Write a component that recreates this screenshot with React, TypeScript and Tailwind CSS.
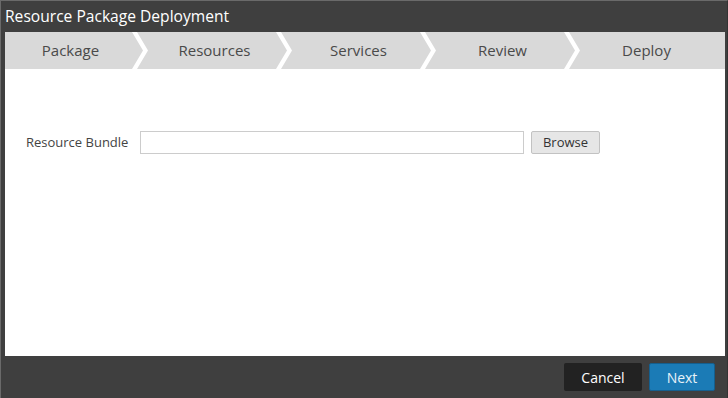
import React from "react";

const steps = ["Package", "Resources", "Services", "Review", "Deploy"];

const Chevron = () => (
  <svg
    className="absolute right-0 top-0"
    width="17"
    height="37"
    viewBox="0 0 17 37"
  >
    <polygon points="0,0 5,0 16,18.5 5,37 0,37 11,18.5" fill="#ffffff" />
  </svg>
);

const App: React.FC = () => {
  return (
    <div
      className="w-[728px] h-[398px] flex flex-col bg-[#3f3f3f] border-l border-t border-[#6a6a6a] border-r border-r-[#333333]"
      style={{ fontFamily: '"Open Sans", "Liberation Sans", sans-serif' }}
    >
      {/* Title */}
      <div className="h-[31px] pl-[4px] flex items-center text-white text-[15.6px] leading-none">
        Resource Package Deployment
      </div>

      <div className="ml-[4px] mr-[2px] flex flex-col h-[324px]">
        {/* Wizard steps */}
        <div className="flex h-[37px] bg-[#d9d9d9]">
          {steps.map((step, i) => (
            <div key={step} className="relative w-[144px] h-full">
              <div className="w-[131px] h-full flex items-center justify-center text-[15px] text-[#4a4a4a]">
                {step}
              </div>
              {i < steps.length - 1 && <Chevron />}
            </div>
          ))}
        </div>

        {/* Body */}
        <div className="flex-1 bg-white pt-[62px] pl-[21px]">
          <div className="flex items-center">
            <label className="text-[13px] text-[#444444] w-[114px]">
              Resource Bundle
            </label>
            <input
              type="text"
              className="w-[384px] h-[23px] border border-[#cccccc] bg-white outline-none"
            />
            <button className="ml-[7px] w-[69px] h-[23px] bg-[#e6e6e6] border border-[#c2c2c2] rounded-[2px] text-[13px] text-[#333333]">
              Browse
            </button>
          </div>
        </div>
      </div>

      {/* Footer */}
      <div className="flex justify-end gap-[7px] pt-[7px] pr-[12px]">
        <button className="w-[78px] h-[28px] bg-[#222222] rounded-[2px] text-white text-[14px]">
          Cancel
        </button>
        <button className="w-[66px] h-[28px] bg-[#1b7bb6] border border-[#155f8e] rounded-[2px] text-[#e8f2f8] text-[14px]">
          Next
        </button>
      </div>
    </div>
  );
};

export default App;
